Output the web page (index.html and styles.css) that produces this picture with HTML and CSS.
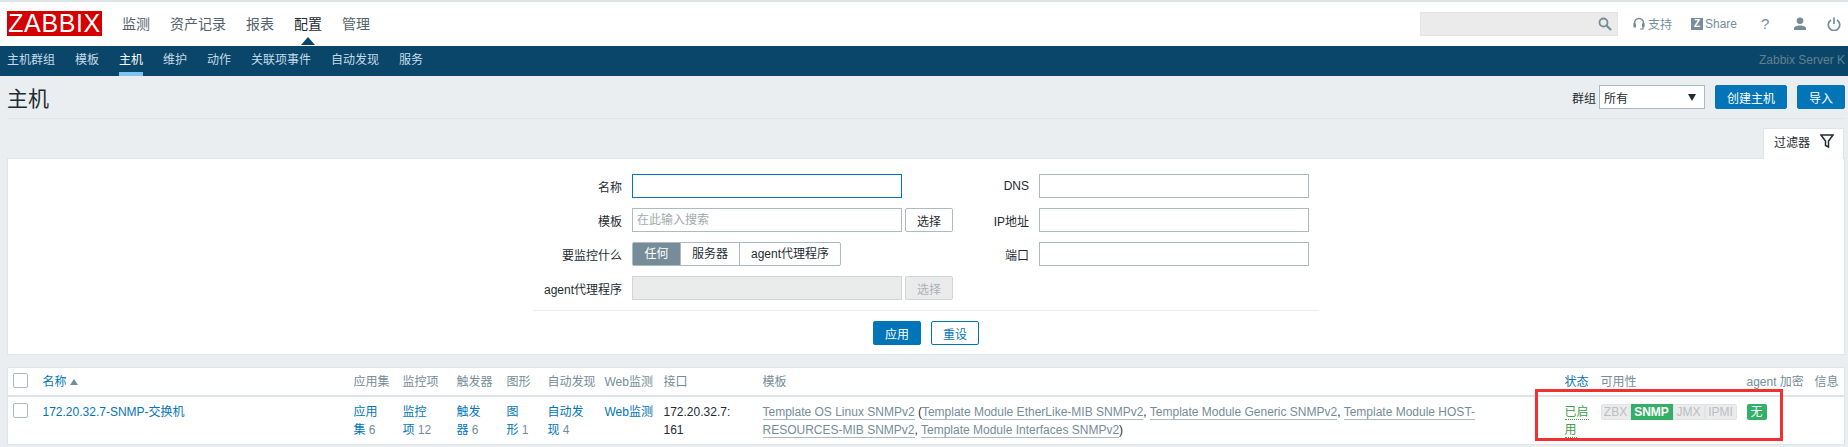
FILE: index.html
```html
<!DOCTYPE html>
<html lang="zh">
<head>
  <meta charset="UTF-8" />
  <title>主机</title>
  <link rel="stylesheet" href="styles.css">
</head>
<body>
  <div class="header">
    <a class="logo" href="#">ZABBIX</a>
    <div class="menu">
      <a href="#">监测</a>
      <a href="#">资产记录</a>
      <a href="#">报表</a>
      <a href="#" class="current">配置</a>
      <a href="#">管理</a>
    </div>
    <div class="tools">
      <div class="search">
        <svg width="14" height="14" viewBox="0 0 14 14"><circle cx="5.5" cy="5.5" r="4" fill="none" stroke="#768d99" stroke-width="1.8"/><path d="M8.5 8.5L13 13" stroke="#768d99" stroke-width="2.2"/></svg>
      </div>
      <a class="tool tool-support" href="#">
        <svg width="12" height="14" viewBox="0 0 12 14"><path d="M1.5 9V6a4.5 4.5 0 0 1 9 0v3" fill="none" stroke="#768d99" stroke-width="1.6"/><rect x="0.5" y="6.5" width="2.5" height="4" fill="#768d99"/><rect x="9" y="6.5" width="2.5" height="4" fill="#768d99"/><path d="M10 10.5V12H7" fill="none" stroke="#768d99" stroke-width="1.2"/></svg>
        支持
      </a>
      <a class="tool tool-share" href="#"><span class="z-mark">Z</span>Share</a>
      <a class="tool tool-help" href="#">?</a>
      <a class="tool tool-user" href="#">
        <svg width="14" height="14" viewBox="0 0 14 14"><circle cx="7" cy="3.8" r="3.3" fill="#768d99"/><path d="M1 13v-1.5C1 9.5 3.5 8.5 7 8.5s6 1 6 3V13z" fill="#768d99"/></svg>
      </a>
      <a class="tool tool-power" href="#">
        <svg width="14" height="14" viewBox="0 0 14 14"><path d="M4 3A5.7 5.7 0 1 0 10 3" fill="none" stroke="#768d99" stroke-width="1.7"/><path d="M7 0.5V7" stroke="#768d99" stroke-width="1.7"/></svg>
      </a>
    </div>
  </div>

  <div class="subnav">
    <a href="#">主机群组</a>
    <a href="#">模板</a>
    <a href="#" class="active">主机</a>
    <a href="#">维护</a>
    <a href="#">动作</a>
    <a href="#">关联项事件</a>
    <a href="#">自动发现</a>
    <a href="#">服务</a>
    <span class="server-name">Zabbix Server K</span>
  </div>

  <div class="container">
    <div class="title-row">
      <h1>主机</h1>
      <div class="title-controls">
        <label class="group-label">群组</label>
        <div class="select"><span>所有</span><i class="caret"></i></div>
        <button class="btn btn-create">创建主机</button>
        <button class="btn btn-import">导入</button>
      </div>
    </div>

    <div class="filter-tabs">
      <div class="filter-tab">
        过滤器
        <svg width="14" height="14" viewBox="0 0 14 14"><path d="M1 1h12L8.5 7v6l-3-1.5V7z" fill="none" stroke="#1f2c33" stroke-width="1.5"/></svg>
      </div>
    </div>

    <div class="filter">
      <div class="filter-grid">
        <div class="filter-col col-left">
          <label>名称</label>
          <div class="field"><input class="text focused" type="text"></div>
          <label>模板</label>
          <div class="field">
            <input class="text" type="text" placeholder="在此输入搜索">
            <button class="btn-small">选择</button>
          </div>
          <label>要监控什么</label>
          <div class="field">
            <div class="seg">
              <span class="seg-on seg-any">任何</span>
              <span class="seg-server">服务器</span>
              <span class="seg-proxy">agent代理程序</span>
            </div>
          </div>
          <label>agent代理程序</label>
          <div class="field">
            <input class="text" type="text" disabled>
            <button class="btn-small" disabled>选择</button>
          </div>
        </div>
        <div class="filter-col col-right">
          <label>DNS</label>
          <div class="field"><input class="text" type="text"></div>
          <label>IP地址</label>
          <div class="field"><input class="text" type="text"></div>
          <label>端口</label>
          <div class="field"><input class="text" type="text"></div>
        </div>
      </div>
      <div class="filter-actions">
        <button class="btn btn-apply">应用</button>
        <button class="btn-outline">重设</button>
      </div>
    </div>

    <div class="table-wrap">
      <table class="hosts">
        <colgroup>
          <col class="c-check"><col class="c-name"><col class="c-apps"><col class="c-items"><col class="c-triggers">
          <col class="c-graphs"><col class="c-disc"><col class="c-web"><col class="c-iface"><col class="c-tpl">
          <col class="c-status"><col class="c-avail"><col class="c-enc"><col class="c-info">
        </colgroup>
        <thead>
          <tr>
            <th><span class="check"></span></th>
            <th><a class="sorted" href="#">名称</a><i class="sort-up"></i></th>
            <th>应用集</th>
            <th>监控项</th>
            <th>触发器</th>
            <th>图形</th>
            <th>自动发现</th>
            <th>Web监测</th>
            <th>接口</th>
            <th>模板</th>
            <th><a class="sorted" href="#">状态</a></th>
            <th>可用性</th>
            <th>agent 加密</th>
            <th>信息</th>
          </tr>
        </thead>
        <tbody>
          <tr>
            <td><span class="check"></span></td>
            <td><a href="#">172.20.32.7-SNMP-交换机</a></td>
            <td><a href="#">应用<br>集</a> <sup>6</sup></td>
            <td><a href="#">监控<br>项</a> <sup>12</sup></td>
            <td><a href="#">触发<br>器</a> <sup>6</sup></td>
            <td><a href="#">图<br>形</a> <sup>1</sup></td>
            <td><a href="#">自动发<br>现</a> <sup>4</sup></td>
            <td><a href="#">Web监测</a></td>
            <td class="iface">172.20.32.7:<br>161</td>
            <td class="templates">
              <a href="#">Template OS Linux SNMPv2</a> (<a href="#">Template Module EtherLike-MIB SNMPv2</a>, <a href="#">Template Module Generic SNMPv2</a>, <a href="#">Template Module HOST-<br>RESOURCES-MIB SNMPv2</a>, <a href="#">Template Module Interfaces SNMPv2</a>)
            </td>
            <td><a class="enabled" href="#">已启</a><br><a class="enabled" href="#">用</a></td>
            <td>
              <div class="avail">
                <span class="tag-zbx">ZBX</span><span class="tag-snmp">SNMP</span><span class="tag-jmx">JMX</span><span class="tag-ipmi">IPMI</span>
              </div>
            </td>
            <td><span class="enc">无</span></td>
            <td></td>
          </tr>
        </tbody>
      </table>
      <div class="red-box"></div>
    </div>
  </div>
</body>
</html>
```

FILE: styles.css
```css
html, body { overflow: hidden; }
body {
  margin: 0; background: #ebeef0; color: #1f2c33;
  font-family: "Liberation Sans", "Noto Sans CJK SC", sans-serif; font-size: 12px;
}
a { color: #0275b8; text-decoration: none; }
button, input { font-family: inherit; font-size: 12px; box-sizing: border-box; }

/* top bar */
.header {
  height: 44px; background: #fff; border-top: 2px solid #dfe4e7; padding: 0 3px 0 7px;
  display: flex; align-items: center; box-sizing: content-box;
}
.logo {
  width: 95px; height: 25px; background: #d40000; color: #fff; font-size: 25px; line-height: 25px;
  text-align: center; letter-spacing: 0.6px; flex: none; margin-top: -1px;
}
.menu { display: flex; gap: 20px; margin-left: 20px; margin-top: -2px; }
.menu a { color: #53626b; font-size: 14px; position: relative; }
.menu a.current { color: #1f2c33; }
.menu a.current::after {
  content: ""; position: absolute; left: 7px; top: 24px;
  border: 7px solid transparent; border-top: 0; border-bottom: 8px solid #0a466a;
}
.tools { margin-left: auto; display: flex; align-items: center; margin-top: -1px; color: #768d99; }
.search {
  width: 198px; height: 24px; background: #ebebeb; border: 1px solid #e4e4e4; box-sizing: border-box;
  display: flex; align-items: center; justify-content: flex-end; padding-right: 5px;
}
.tool { color: #768d99; display: flex; align-items: center; }
.tool-support { margin-left: 15px; gap: 3px; }
.tool-share { margin-left: 19px; }
.z-mark {
  width: 12px; height: 12px; background: #768d99; color: #fff; font-size: 10px; font-weight: bold;
  line-height: 12px; text-align: center; margin-right: 2px;
}
.tool-help { margin-left: 24px; font-size: 15px; width: 10px; }
.tool-user { margin-left: 22px; }
.tool-power { margin-left: 20px; margin-right: 4px; }

/* second level nav */
.subnav {
  height: 30px; background: #0a466a; display: flex; gap: 20px; padding: 0 3px 0 7px;
  align-items: stretch; overflow: hidden;
}
.subnav a { color: #c5dbe8; line-height: 29px; height: 30px; box-sizing: border-box; }
.subnav a.active { color: #fff; border-bottom: 4px solid #7fc4ee; }
.server-name { margin-left: auto; color: #63808f; line-height: 29px; white-space: nowrap; }

.container { padding: 0 3px 0 7px; }

.title-row {
  height: 42px; border-bottom: 1px solid #dfe4e7; display: flex; align-items: center;
  justify-content: space-between; box-sizing: content-box;
}
.title-row h1 { margin: 0; font-size: 21px; font-weight: normal; margin-top: -1px; }
.title-controls { display: flex; align-items: center; }
.group-label { margin-right: 3px; }
.select {
  width: 106px; height: 24px; background: #fff; border: 1px solid #acbbc2; box-sizing: border-box;
  display: flex; align-items: center; justify-content: space-between; padding: 0 8px 0 4px;
}
.caret { border: 4px solid transparent; border-top: 7px solid #1f2c33; border-bottom: 0; }
.btn {
  height: 24px; background: #0275b8; color: #fff; border: 1px solid #0275b8; border-radius: 2px; padding: 0;
}
.btn-create { width: 72px; margin-left: 10px; }
.btn-import { width: 48px; margin-left: 10px; }

.filter-tabs { display: flex; justify-content: flex-end; padding-top: 9px; padding-right: 1px; }
.filter-tab {
  width: 81px; height: 31px; background: #fff; border: 1px solid #dfe4e7; border-bottom: 0; box-sizing: border-box;
  display: flex; align-items: center; justify-content: flex-start; gap: 10px; padding: 0 0 6px 10px;
  margin-bottom: -1px; position: relative; z-index: 1;
}
.filter {
  background: #fff; border: 1px solid #dfe4e7; height: 197px; box-sizing: border-box; margin: 0 0 12px;
  padding-top: 15px;
}
.filter-grid {
  width: 786px; margin: 0 auto; display: flex; height: 136px; border-bottom: 1px solid #ebeef0; box-sizing: content-box;
}
.filter-col { display: grid; grid-auto-rows: 24px; row-gap: 10px; align-items: center; align-content: start; }
.col-left { grid-template-columns: 89px 330px; column-gap: 10px; }
.col-right { grid-template-columns: 66px 270px; column-gap: 10px; margin-left: 1px; }
.filter-col label { text-align: right; }
.field { display: flex; align-items: center; gap: 3px; }
.text { width: 270px; height: 24px; border: 1px solid #acbbc2; background: #fff; padding: 0 4px; outline: 0; }
.text.focused { border-color: #0275b8; }
.text::placeholder { color: #a3a9ac; }
.text:disabled { background: #ebebeb; border-color: #cfd6da; }
.btn-small {
  width: 48px; height: 24px; background: #fff; border: 1px solid #acbbc2; border-radius: 2px; color: #1f2c33; padding: 0;
}
.btn-small:disabled { background: #ebebeb; border-color: #cfd6da; color: #a9b2b7; }
.seg { display: flex; height: 24px; border: 1px solid #acbbc2; border-radius: 2px; box-sizing: border-box; }
.seg span { line-height: 22px; text-align: center; border-left: 1px solid #acbbc2; box-sizing: border-box; }
.seg .seg-on { background: #768d99; color: #fff; border-left: 0; }
.seg-any { width: 47px; }
.seg-server { width: 59px; }
.seg-proxy { width: 101px; }
.filter-actions { display: flex; justify-content: center; gap: 10px; padding-top: 10px; }
.btn-apply { width: 48px; }
.btn-outline { width: 48px; height: 24px; background: #fff; color: #0275b8; border: 1px solid #0275b8; border-radius: 2px; padding: 0; }

/* hosts table */
.table-wrap { position: relative; }
.hosts {
  width: 100%; table-layout: fixed; border-collapse: collapse; background: #fff;
  border: 1px solid #dfe4e7;
}
.c-check { width: 30px; } .c-name { width: 311px; } .c-apps { width: 49px; } .c-items { width: 54px; }
.c-triggers { width: 50px; } .c-graphs { width: 41px; } .c-disc { width: 57px; } .c-web { width: 59px; }
.c-iface { width: 99px; } .c-tpl { width: 802px; } .c-status { width: 36px; } .c-avail { width: 146px; }
.c-enc { width: 68px; }
.hosts th {
  height: 28px; padding: 0 5px 2px; text-align: left; font-weight: normal; color: #768d99;
  border-bottom: 2px solid #dfe4e7; white-space: nowrap; box-sizing: border-box;
}
.hosts td { padding: 6px 5px 5px; vertical-align: top; line-height: 18px; color: #1f2c33; }
.hosts tbody tr { border-bottom: 1px solid #dfe4e7; }
.hosts sup { font-size: 12px; vertical-align: baseline; color: #768d99; }
.check {
  display: block; width: 15px; height: 15px; border: 1px solid #acbbc2; border-radius: 2px;
  box-sizing: border-box; margin-left: 0;
}
.sort-up {
  display: inline-block; border: 4px solid transparent; border-top: 0; border-bottom: 6px solid #768d99;
  margin-left: 3px; vertical-align: 1px;
}
.templates a { color: #768d99; border-bottom: 1px solid #acbbc2; }
.enabled { color: #429e47; border-bottom: 1px dotted #429e47; }
.avail {
  display: flex; height: 16px; width: 136px; font-weight: bold; font-size: 12px; line-height: 15px; margin-top: 1px;
}
.avail span {
  background: #ebebeb; color: #b9bfc3; border: 1px solid #dfe4e7; box-sizing: border-box; text-align: center; font-weight: normal;
}
.tag-zbx { width: 30px; border-radius: 2px 0 0 2px; }
.avail .tag-snmp { width: 42px; background: #34af67; border-color: #34af67; color: #fff; font-weight: bold; }
.tag-jmx { width: 32px; }
.tag-ipmi { width: 32px; border-radius: 0 2px 2px 0; }
.enc {
  display: block; width: 20px; height: 16px; background: #34af67; color: #fff; text-align: center; line-height: 16px;
  border-radius: 2px; margin-top: 1px;
}
/* red annotation drawn over the screenshot */
.red-box {
  position: absolute; left: 1528px; top: 22px; width: 248px; height: 52px; border: 3px solid #f33030; box-sizing: border-box;
}
```
